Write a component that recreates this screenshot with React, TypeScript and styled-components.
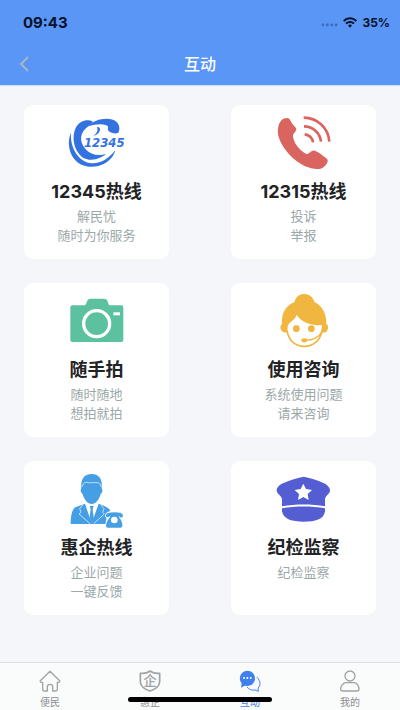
import React from "react";
import styled, { createGlobalStyle } from "styled-components";

const GlobalStyle = createGlobalStyle`
  *, *::before, *::after { box-sizing: border-box; }
  body {
    margin: 0;
    background: #f4f6f9;
    font-family: Inter, "Noto Sans CJK SC", sans-serif;
  }
`;

const Screen = styled.div`
  display: flex;
  flex-direction: column;
  min-height: 100vh;
`;

const Header = styled.header`
  background: #5996f6;
  border-bottom: 1px solid #c9dcfb;
`;

const StatusBar = styled.div`
  display: flex;
  align-items: center;
  justify-content: space-between;
  height: 44px;
  padding: 0 10px 0 23px;
  color: #06102a;
  font-weight: 700;
`;

const Clock = styled.time`
  font-size: 15px;
`;

const StatusIcons = styled.div`
  display: flex;
  align-items: center;
  gap: 5px;
  font-size: 12px;
`;

const NavBar = styled.nav`
  display: grid;
  grid-template-columns: 48px 1fr 48px;
  align-items: center;
  height: 41px;
  padding-bottom: 1px;
`;

const BackButton = styled.button`
  display: flex;
  justify-content: center;
  padding: 4px;
  border: 0;
  background: none;
  color: #a9b4c8;
`;

const PageTitle = styled.h1`
  margin: 0;
  color: #fff;
  font-size: 16px;
  font-weight: 500;
  line-height: 24px;
  text-align: center;
`;

const Services = styled.main`
  flex: 1;
  display: grid;
  grid-template-columns: 1fr 1fr;
  align-content: start;
  gap: 24px 62px;
  padding: 19px 24px 24px;
`;

const Card = styled.button`
  display: flex;
  flex-direction: column;
  align-items: center;
  min-height: 154px;
  padding: 9px 0 0;
  border: 0;
  border-radius: 9px;
  background: #fff;
  font-family: inherit;
`;

const CardIcon = styled.svg`
  width: 60px;
  height: 60px;
`;

const CardTitle = styled.span`
  margin-top: 5px;
  color: #222325;
  font-size: 18px;
  font-weight: 700;
  line-height: 26px;
`;

const CardText = styled.span`
  margin-top: 2px;
  color: #9ba8a8;
  font-size: 13px;
  line-height: 19px;
  white-space: pre-line;
`;

const TabBar = styled.nav`
  position: relative;
  display: grid;
  grid-template-columns: repeat(4, 1fr);
  height: 48px;
  border-top: 1px solid #dfe1e3;
  background: #fafbfb;
`;

const Tab = styled.a<{ $active?: boolean }>`
  display: flex;
  flex-direction: column;
  align-items: center;
  gap: 3px;
  padding-top: 7px;
  color: ${(p) => (p.$active ? "#3f80ee" : "#8b8d8f")};
  font-size: 10px;
  line-height: 14px;
  text-decoration: none;
`;

const TabIcon = styled.svg`
  width: 22px;
  height: 22px;
  color: ${(p) => p.color};
`;

const HomeIndicator = styled.div`
  position: absolute;
  bottom: 8px;
  left: 50%;
  width: 36%;
  height: 5px;
  border-radius: 3px;
  background: #000;
  transform: translateX(-50%);
`;

const HotlineLogo = () => (
  <CardIcon viewBox="140 42 180 180" fill="#3472e2" aria-hidden="true">
    <path d="M152 98C142 118 143 151 160 175C180 203 222 208 254 190C271 180 281 166 285 150C264 178 236 194 207 189C172 180 149 142 152 98Z" />
    <path d="M218 65C201 56 178 63 167 82C152 112 161 151 184 170C208 187 238 178 257 162C232 170 210 163 196 148C175 124 178 96 205 78Z" />
    <path d="M203 79C223 56 270 49 289 66C299 76 299 91 293 99C282 102 268 99 263 91C262 82 266 79 258 76C243 70 224 73 203 79Z" />
    <path d="M230 81C244 79 243 101 219 108C229 100 234 93 230 81Z" />
    <text x="191" y="142" fontFamily="DejaVu Sans, sans-serif" fontSize="35" fontWeight="700" fontStyle="italic">12345</text>
  </CardIcon>
);

const PhoneIcon = () => (
  <CardIcon viewBox="146 42 180 180" fill="#d96460" aria-hidden="true">
    <path d="M159 80C163 64 172 54 185 54C194 54 196 64 202 73L212 84C216 93 205 98 203 106C202 126 224 154 243 162C252 164 257 150 268 152C277 154 298 170 306 178C311 186 299 202 286 206C263 212 229 197 207 178C179 153 150 112 159 80Z" />
    <g fill="none" stroke="#d96460" strokeWidth="8">
      <path d="M238 103A27 27 0 0 1 263 127" />
      <path d="M236 79A51 51 0 0 1 287 125" />
      <path d="M235 53A77 77 0 0 1 312 125" />
    </g>
  </CardIcon>
);

const CameraIcon = () => (
  <CardIcon viewBox="140 42 180 180" fill="#5bc19f" aria-hidden="true">
    <path d="M156 82H194C199 79 198 70 203 65Q205 62 211 62H250Q256 62 259 65C264 70 263 79 267 82H303Q309 82 309 88V186Q309 192 303 192H156Q150 192 150 186V88Q150 82 156 82Z" />
    <circle cx="229" cy="137" r="39" fill="none" stroke="#fff" strokeWidth="10" />
    <rect x="279" y="103" width="20" height="9" fill="#fff" />
  </CardIcon>
);

const AgentIcon = () => (
  <CardIcon viewBox="146 42 180 180" fill="#f0b640" aria-hidden="true">
    <path d="M208 72C211 56 223 48 237 48C251 48 264 57 267 72C291 83 304 108 303 138C312 143 309 163 296 164L287 162L290 142C260 143 229 134 214 110C210 128 187 132 187 147L186 163C166 167 160 145 170 138C167 107 181 83 208 72Z" />
    <g fill="none" stroke="#f0b640">
      <path d="M185 158C190 189 211 205 237 205C263 205 284 188 290 160" strokeWidth="5" />
      <path d="M240 187C264 187 280 178 290 161" strokeWidth="4" />
    </g>
    <circle cx="213" cy="152" r="10" />
    <circle cx="258" cy="152" r="10" />
    <ellipse cx="237" cy="187" rx="9" ry="6" />
  </CardIcon>
);

const AdvisorIcon = () => (
  <CardIcon viewBox="140 42 180 180" fill="#469fe4" aria-hidden="true">
    <path d="M183 96C181 69 191 54 214 54C237 54 247 70 244 95C248 103 246 110 241 114C236 132 226 144 214 144C202 144 192 132 187 114C182 111 179 103 183 96Z" />
    <path d="M186 92C188 82 191 80 199 79C211 83 232 76 238 83L242 92" fill="none" stroke="#fff" strokeWidth="2" />
    <path d="M194 143L214 202L235 143C251 149 265 153 270 165C256 168 250 180 259 187L255 204H151C151 180 155 160 165 154C173 149 184 148 194 143Z" />
    <path d="M197 144L214 200L232 144L224 150H205Z" fill="#fff" />
    <path d="M208 150H220L217 160L221 190L214 202L207 190L211 160Z" />
    <path d="M187 147L178 158L182 169L176 174L209 203M242 147L251 158L247 169L252 174L220 203" fill="none" stroke="#fff" strokeWidth="2" />
    <path d="M256 181C253 172 263 168 282 168C301 168 311 172 308 182Q307 187 298 185L296 180H269L267 184Q258 187 256 181Z" stroke="#fff" strokeWidth="2" />
    <path d="M271 175H293L297 185C304 192 307 203 306 211Q306 215 300 215H263Q257 215 257 210C257 201 262 191 268 185Z" />
    <circle cx="282" cy="192" r="10" fill="#fff" />
  </CardIcon>
);

const CapIcon = () => (
  <CardIcon viewBox="146 42 180 180" fill="#545ed2" aria-hidden="true">
    <path d="M235 62C257 67 279 73 296 82C309 88 315 98 314 105C313 113 299 120 299 130V151C259 144 211 144 170 151V130C170 120 155 114 154 104C154 94 163 86 173 82C192 73 213 67 235 62Z" />
    <path d="M170 157C210 150 259 150 299 157V166C295 191 270 197 235 197C200 197 174 190 170 166Z" />
    <path d="M234 83L242 99L260 102L247 114L250 132L234 123L218 132L221 114L208 102L226 99Z" fill="#fff" />
  </CardIcon>
);

const services = [
  { title: "12345热线", text: "解民忧\n随时为你服务", Icon: HotlineLogo },
  { title: "12315热线", text: "投诉\n举报", Icon: PhoneIcon },
  { title: "随手拍", text: "随时随地\n想拍就拍", Icon: CameraIcon },
  { title: "使用咨询", text: "系统使用问题\n请来咨询", Icon: AgentIcon },
  { title: "惠企热线", text: "企业问题\n一键反馈", Icon: AdvisorIcon },
  { title: "纪检监察", text: "纪检监察", Icon: CapIcon },
];

const iconStroke = {
  fill: "none",
  stroke: "currentColor",
  strokeWidth: 4,
  strokeLinejoin: "round",
  strokeLinecap: "round",
} as const;

const tabs = [
  {
    label: "便民",
    drawing: (
      <path {...iconStroke} d="M33 4L4 32Q2 36 7 37H11V58Q11 63 16 63H25V50Q25 43 33 43Q41 43 41 50V63H50Q55 63 55 58V37H59Q64 36 62 32Z" />
    ),
  },
  {
    label: "惠企",
    drawing: (
      <>
        <path {...iconStroke} strokeWidth={5} d="M33 3C25 9 14 11 4 10V36C5 49 18 58 33 63C48 58 61 49 62 36V10C52 11 41 9 33 3Z" />
        <text x="33" y="46" textAnchor="middle" fontSize="38" fontWeight="400" fill="currentColor" stroke="currentColor">企</text>
      </>
    ),
  },
  {
    label: "互动",
    active: true,
    drawing: (
      <>
        <path {...iconStroke} strokeWidth={3} d="M54 22C66 33 65 47 57 54L58 64L48 60C38 62 30 58 25 52" />
        <path fill="currentColor" d="M25 2C38 2 48 12 48 25C48 38 38 48 25 48L17 47L6 53L8 40C-4 26 5 2 25 2Z" />
        <g fill="#fff">
          <circle cx="15" cy="24" r="3" />
          <circle cx="25" cy="24" r="3" />
          <circle cx="35" cy="24" r="3" />
        </g>
      </>
    ),
  },
  {
    label: "我的",
    drawing: (
      <>
        <circle {...iconStroke} cx="33" cy="18" r="15" />
        <path {...iconStroke} d="M21 38H45C54 38 60 49 60 57Q60 63 54 63H12Q5 63 5 57C5 49 12 38 21 38Z" />
      </>
    ),
  },
];

export default function App() {
  return (
    <Screen>
      <GlobalStyle />
      <Header>
        <StatusBar>
          <Clock>09:43</Clock>
          <StatusIcons>
            <svg width="17" height="14" viewBox="0 0 17 14" fill="#3c6cbd" aria-hidden="true">
              <circle cx="2" cy="10" r="1.4" />
              <circle cx="6.4" cy="10" r="1.4" />
              <circle cx="10.8" cy="10" r="1.4" />
              <circle cx="15.2" cy="10" r="1.4" />
            </svg>
            <svg width="14" height="11" viewBox="0 0 42 33" fill="none" stroke="#06102a" strokeWidth="6" aria-hidden="true">
              <path d="M2 12C13 1 29 1 40 12" />
              <path d="M9 20C16 13 26 13 33 20" />
              <path d="M15 25Q21 20 27 25L21 32Z" fill="#06102a" stroke="none" />
            </svg>
            <span>35%</span>
          </StatusIcons>
        </StatusBar>
        <NavBar>
          <BackButton type="button" aria-label="返回">
            <svg width="10" height="16" viewBox="0 0 10 16" fill="none" stroke="currentColor" strokeWidth="2" aria-hidden="true">
              <path d="M9 1L2 8L9 15" />
            </svg>
          </BackButton>
          <PageTitle>互动</PageTitle>
        </NavBar>
      </Header>
      <Services>
        {services.map(({ title, text, Icon }) => (
          <Card key={title} type="button">
            <Icon />
            <CardTitle>{title}</CardTitle>
            <CardText>{text}</CardText>
          </Card>
        ))}
      </Services>
      <TabBar>
        {tabs.map(({ label, active, drawing }) => (
          <Tab key={label} href="#" $active={active} aria-current={active ? "page" : undefined}>
            <TabIcon viewBox="0 0 66 66" color={active ? "#3f80ee" : "#a0a2a4"} aria-hidden="true">
              {drawing}
            </TabIcon>
            {label}
          </Tab>
        ))}
        <HomeIndicator />
      </TabBar>
    </Screen>
  );
}
